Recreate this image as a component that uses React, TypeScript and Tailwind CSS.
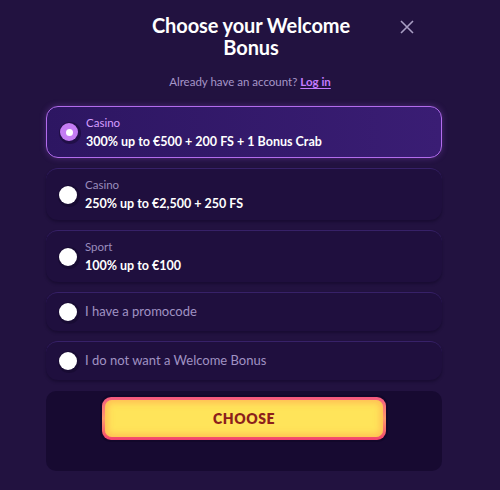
const options = [
	{ id: "casino-300", label: "Casino", title: "300% up to €500 + 200 FS + 1 Bonus Crab" },
	{ id: "casino-250", label: "Casino", title: "250% up to €2,500 + 250 FS" },
	{ id: "sport", label: "Sport", title: "100% up to €100" },
	{ id: "promo", text: "I have a promocode" },
	{ id: "none", text: "I do not want a Welcome Bonus" },
];

function Radio({ checked }: { checked: boolean }) {
	return checked ? (
		<span className="flex h-[18px] w-[18px] shrink-0 items-center justify-center rounded-full bg-[#c47cf3] shadow-[1px_1px_0_2px_rgba(20,8,45,0.5)]">
			<span className="h-[7px] w-[7px] rounded-full bg-white" />
		</span>
	) : (
		<span className="h-[18px] w-[18px] shrink-0 rounded-full bg-white shadow-[1px_1px_0_2px_rgba(20,8,45,0.6)]" />
	);
}

export default function App() {
	const selected = "casino-300";

	return (
		<div
			className="relative h-[490px] w-[500px] overflow-hidden bg-[#221240] text-white"
			style={{ fontFamily: "Lato, 'Noto Sans', sans-serif" }}
		>
			{/* Header */}
			<div className="relative pt-[14px]">
				<h2 className="mx-auto w-[220px] pl-[2px] text-center text-[20px] font-bold leading-[22px] tracking-[-0.1px] text-white">
					Choose your Welcome Bonus
				</h2>
				<button className="absolute right-[86px] top-[20px] text-[#a99ec4]" aria-label="Close">
					<svg className="h-[14px] w-[14px]" viewBox="0 0 14 14" fill="none" stroke="currentColor" strokeWidth="1.6">
						<path d="M1 1l12 12M13 1L1 13" />
					</svg>
				</button>
				<p className="mt-4 text-center text-[11.5px] leading-4 text-[#a696c9]">
					Already have an account?{" "}
					<a className="font-bold text-[#c57bff] underline underline-offset-2">Log in</a>
				</p>
			</div>

			{/* Options */}
			<div className="ml-[46px] mt-4 flex w-[396px] flex-col gap-[10px]">
				{options.map((opt) => {
					const isSel = opt.id === selected;
					return (
						<div
							key={opt.id}
							className={`flex items-center gap-[8px] rounded-[12px] pl-[13px] ${
								opt.text ? "h-[39px]" : "h-[52px]"
							} ${
								isSel
									? "border-[1.5px] border-[#b36ced] bg-gradient-to-r from-[#2d1662] to-[#3a1d74] shadow-[0_0_6px_rgba(160,90,230,0.35)]"
									: "border-t border-[#372168] bg-[#1f0f3e] shadow-[0_2px_3px_rgba(10,3,25,0.35)]"
							}`}
						>
							<Radio checked={isSel} />
							{opt.text ? (
								<span className="text-[13px] text-[#a092c3]">{opt.text}</span>
							) : (
								<div className="flex flex-col">
									<span className={`text-[11.5px] leading-[19px] ${isSel ? "text-[#d59dff]" : "text-[#9a8cbc]"}`}>
										{opt.label}
									</span>
									<span className="text-[12.5px] font-bold leading-[20px] text-white">{opt.title}</span>
								</div>
							)}
						</div>
					);
				})}
			</div>

			{/* Bottom panel */}
			<div className="ml-[46px] mt-[11px] flex h-[80px] w-[396px] justify-center rounded-[10px] bg-[#170a31] pt-[6px]">
				<button className="h-[43px] w-[284px] rounded-[9px] bg-gradient-to-b from-[#f4577f] via-[#ff9a6a] to-[#f23f6c] p-[3px] shadow-[0_0_0_2px_#12072a]">
					<span className="flex h-full w-full items-center justify-center rounded-[7px] bg-[#ffe45a] text-[14px] font-extrabold tracking-[0.6px] text-[#8c1f1c] shadow-[inset_0_0_6px_3px_rgba(255,160,80,0.55)]">
						CHOOSE
					</span>
				</button>
			</div>
		</div>
	);
}
